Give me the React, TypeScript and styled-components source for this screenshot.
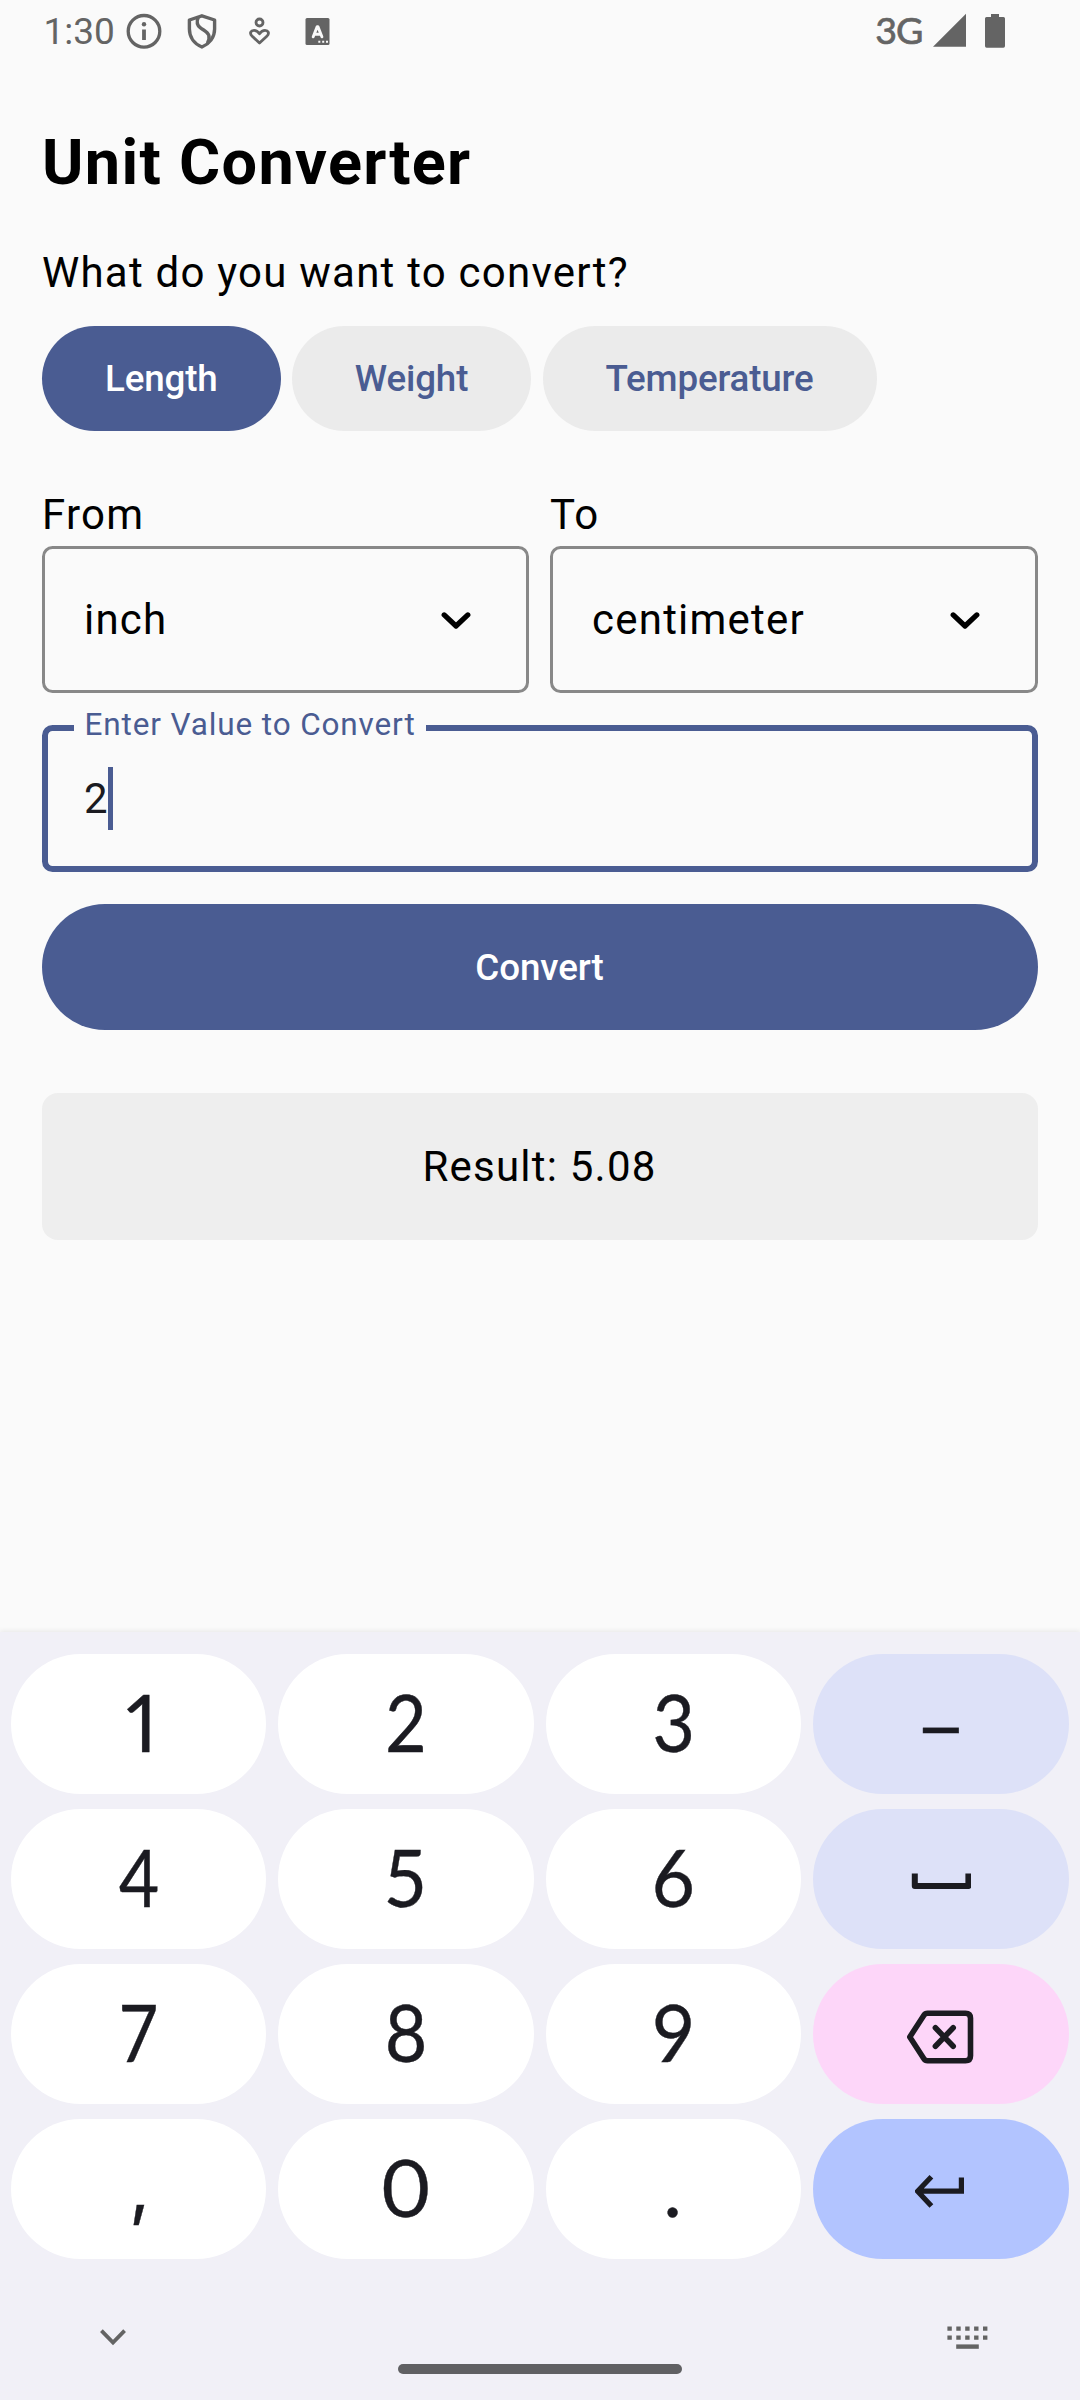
import React from "react";
import styled, { createGlobalStyle } from "styled-components";

const Global = createGlobalStyle`
  *, *::before, *::after { box-sizing: border-box; }
  body { margin: 0; background: #fafafa; font-family: Roboto, sans-serif; }
  button { font: inherit; color: inherit; border: 0; margin: 0; padding: 0; }
  svg { display: block; flex: none; }
`;

const Screen = styled.div`
  width: 1080px;
  height: 2400px;
  display: flex;
  flex-direction: column;
  background: #fafafa;
  color: #000;
  overflow: hidden;
`;

const StatusBar = styled.header`
  height: 63px;
  padding: 0 75px 0 43.5px;
  display: flex;
  justify-content: space-between;
  color: #646464;
`;
const StatusGroup = styled.div<{ $gap: number }>`
  display: flex;
  gap: ${(p) => p.$gap}px;
  padding-top: 13px;
  height: 49px;
`;
const Clock = styled.span`
  width: 82.5px;
  margin-right: -22px;
  font-size: 37px;
  line-height: 37px;
`;
const Network = styled.span`
  font-family: Lato, sans-serif;
  font-weight: 400;
  font-size: 37.5px;
  line-height: 34px;
  letter-spacing: -1px;
  margin-right: 10.5px;
  -webkit-text-stroke: 0.7px currentColor;
`;
const Spacer = styled.span`
  width: 19px;
`;

const Main = styled.main`
  flex: 1;
  padding: 58px 42px 0;
  display: flex;
  flex-direction: column;
`;
const Title = styled.h1`
  margin: 0 0 36px;
  font-size: 63px;
  line-height: 84px;
  font-weight: 700;
  letter-spacing: 1.3125px;
`;
const BodyText = styled.div`
  font-size: 42px;
  line-height: 63px;
  letter-spacing: 1.23px;
  white-space: nowrap;
`;
const Chips = styled.div`
  display: flex;
  gap: 11.3px;
  margin-top: 22px;
`;
const Chip = styled.button<{ $active?: boolean }>`
  height: 105px;
  padding: 0 63px;
  border-radius: 52.5px;
  background: ${(p) => (p.$active ? "#4a5c92" : "#ebebeb")};
  color: ${(p) => (p.$active ? "#fff" : "#4a5c92")};
  font-weight: 500;
  font-size: 36.75px;
  line-height: 52px;
  letter-spacing: -0.16px;
`;
const Units = styled.div`
  display: grid;
  grid-template-columns: 487px 488px;
  gap: 21px;
  margin-top: 52px;
`;
const Select = styled.button`
  width: 100%;
  height: 147px;
  padding: 0 55.5px 0 39px;
  display: flex;
  align-items: center;
  justify-content: space-between;
  background: transparent;
  border: 3px solid #888;
  border-radius: 10.5px;
`;
const Field = styled.label`
  position: relative;
  height: 147px;
  margin-top: 32px;
  padding: 36px;
  display: flex;
  align-items: flex-start;
  border: 6px solid #4a5c92;
  border-radius: 10.5px;
  color: #1b1b21;
`;
const FieldLabel = styled.span`
  position: absolute;
  left: 26px;
  top: -27px;
  padding: 0 10.5px;
  background: #fafafa;
  color: #4a5c92;
  font-size: 31.5px;
  line-height: 42px;
  letter-spacing: 0.87px;
  white-space: nowrap;
`;
const FieldValue = styled(BodyText)`
  letter-spacing: 0;
`;
const Caret = styled.span`
  width: 5.25px;
  height: 63px;
  margin-left: 0.5px;
  background: #4a5c92;
`;
const Submit = styled.button`
  height: 126px;
  margin-top: 32px;
  padding: 1px 1px 0 0;
  border-radius: 63px;
  background: #4a5c92;
  color: #fff;
  font-weight: 500;
  font-size: 36.75px;
  line-height: 52px;
  letter-spacing: -0.12px;
`;
const Result = styled.div`
  height: 147px;
  margin-top: 63px;
  padding-right: 1px;
  display: flex;
  align-items: center;
  justify-content: center;
  border-radius: 16px;
  background: #eee;
`;

const Keyboard = styled.section`
  height: 768px;
  flex: none;
  padding: 22px 11.2px 0 11px;
  display: flex;
  flex-direction: column;
  background: #f1f0f7;
  box-shadow: 0 -1px 5px rgba(0, 0, 0, 0.08);
  color: #1b1b21;
`;
const Keys = styled.div`
  display: grid;
  grid-template-columns: repeat(4, 1fr);
  grid-auto-rows: 140px;
  gap: 15px 12px;
`;
type Tone = "plain" | "soft" | "pink" | "blue";
const tones: Record<Tone, string> = {
  plain: "#fff",
  soft: "#dde1f8",
  pink: "#fdd6f9",
  blue: "#b2c4ff",
};
const Key = styled.button<{ $tone: Tone; $icon?: boolean }>`
  display: flex;
  align-items: center;
  justify-content: center;
  padding: ${(p) => (p.$icon ? "5px 0 0" : "0 0 4px")};
  border-radius: 70px;
  background: ${(p) => tones[p.$tone]};
`;
const Glyph = styled.span<{ $font?: string; $size?: number; $stretch?: number; $x?: number; $y?: number }>`
  font-family: ${(p) => p.$font || "Lato"}, sans-serif;
  font-feature-settings: "pnum";
  font-size: ${(p) => p.$size || 79}px;
  line-height: 96px;
  -webkit-text-stroke: 0.4px currentColor;
  transform: translate(${(p) => p.$x || 0}px, ${(p) => p.$y || 0}px) scaleX(${(p) => p.$stretch || 1});
`;
const NavRow = styled.div`
  display: flex;
  justify-content: space-between;
  margin-top: 64px;
  padding: 0 80.8px 0 89px;
  height: 27px;
  color: #646464;
`;
const HomeBar = styled.div`
  align-self: center;
  width: 284px;
  height: 10px;
  margin-top: 14px;
  border-radius: 5px;
  background: #606063;
`;

const Info = () => (
  <svg width="36" height="36" fill="none" stroke="currentColor">
    <circle cx="18" cy="18.3" r="15.8" strokeWidth="3.3" />
    <circle cx="18" cy="11.2" r="2.2" fill="currentColor" stroke="none" />
    <path d="M18 16.5V27" strokeWidth="3.8" />
  </svg>
);
const Shield = () => (
  <svg width="36" height="36" fill="none" stroke="currentColor" strokeWidth="3.4" strokeLinejoin="round">
    <path d="M17.9 2.8 5.4 7V16C5.4 24.5 10.5 31 17.9 34 25.3 31 30.6 24.5 30.6 16V7Z" />
    <path d="M14.2 4.3C12.6 8.2 12.8 12 16.2 14.6 19.8 17.4 23.6 18.8 24.8 22.3 25.6 25 24.8 27.6 23.4 30.3" />
  </svg>
);
const Wellbeing = () => (
  <svg width="36" height="36" fill="none" stroke="currentColor" strokeWidth="2.8" strokeLinejoin="round">
    <circle cx="17.5" cy="9.5" r="3.5" />
    <path d="M17.5 30 10.2 23.2C7 20.2 9 17.4 12 17.4 14.4 17.4 16 18.6 17.5 20.8 19 18.6 20.6 17.4 23 17.4 26 17.4 28 20.2 24.8 23.2Z" />
  </svg>
);
const Letter = () => (
  <svg width="36" height="36" fill="none">
    <rect x="5.5" y="5" width="24" height="27" rx="1.5" fill="currentColor" />
    <path d="M13.2 23.8 17.2 13.6H17.9L21.9 23.8M14.8 21.2H20.4" stroke="#fafafa" strokeWidth="2.9" strokeLinecap="round" strokeLinejoin="round" />
    <path d="M18.3 28.8H20.3M22.2 28.8H24.2M26 28.8H28" stroke="#fafafa" strokeWidth="2" />
  </svg>
);
const Signal = () => (
  <svg width="33" height="36" fill="currentColor">
    <path d="M0 33.8 33 0.8V33.8Z" />
  </svg>
);
const Battery = () => (
  <svg width="20" height="36" fill="currentColor">
    <path d="M6 1H14V4H18.5Q20 4 20 5.5V33Q20 34.7 18.4 34.7H1.6Q0 34.7 0 33V5.5Q0 4 1.5 4H6Z" />
  </svg>
);
const Chevron = () => (
  <svg width="30" height="20" fill="none" stroke="currentColor" strokeWidth="5.2" strokeLinecap="round" strokeLinejoin="round">
    <path d="M3.2 4.9 15 16 26.8 4.9" />
  </svg>
);
const Space = () => (
  <svg width="60" height="20" fill="none" stroke="currentColor" strokeWidth="6" strokeLinejoin="round">
    <path d="M3.8 1.4V14H57.4V1.4" />
  </svg>
);
const Backspace = () => (
  <svg width="68" height="54" fill="none" stroke="currentColor" strokeWidth="5.6" strokeLinecap="round" strokeLinejoin="round">
    <path d="M20.5 3.2H58.5Q63.5 3.2 63.5 8.2V45.8Q63.5 50.8 58.5 50.8H20.5Q18.2 50.8 16.9 48.8L2.8 27 16.9 5.2Q18.2 3.2 20.5 3.2Z" />
    <path d="M28.4 17.8 46.2 36.2M46.2 17.8 28.4 36.2" />
  </svg>
);
const Enter = () => (
  <svg width="52" height="34" fill="none" stroke="currentColor" strokeWidth="5.2">
    <path d="M16.4 1.8 2.6 16.2 16.4 31M3.6 16.2H46.4V2.6" />
  </svg>
);
const HideKeyboard = () => (
  <svg width="27" height="27" fill="none" stroke="currentColor" strokeWidth="3.8">
    <path d="M1.4 7.6 13 19.6 24.6 7.6" />
  </svg>
);
const KeyboardGlyph = () => (
  <svg width="41" height="27" fill="none" stroke="currentColor" strokeWidth="4.4">
    <path d="M0.4 5.6H40.6M0.4 14.6H40.6" strokeDasharray="4.4 4.5" />
    <path d="M9.2 23.6H31.8" />
  </svg>
);

interface KeySpec {
  label?: string;
  icon?: React.ReactNode;
  tone?: Tone;
  font?: string;
  size?: number;
  stretch?: number;
  x?: number;
  y?: number;
}
const KEYS: KeySpec[] = [
  { label: "1", x: 3 },
  { label: "2", stretch: 0.91, x: -0.5 },
  { label: "3", stretch: 0.93 },
  { label: "–", tone: "soft", stretch: 1.13, y: 1.5 },
  { label: "4", stretch: 0.88, x: 0.5 },
  { label: "5", stretch: 0.95, x: -1 },
  { label: "6", stretch: 0.95 },
  { icon: <Space />, tone: "soft" },
  { label: "7", stretch: 0.87, x: -0.5 },
  { label: "8", stretch: 0.93 },
  { label: "9", stretch: 0.95 },
  { icon: <Backspace />, tone: "pink" },
  { label: ",", font: "Inter", size: 72, x: 1, y: -1 },
  { label: "0", x: -0.5 },
  { label: ".", x: -1 },
  { icon: <Enter />, tone: "blue" },
];

export default function App() {
  return (
    <Screen>
      <Global />
      <StatusBar>
        <StatusGroup $gap={22}>
          <Clock>1:30</Clock>
          <Info />
          <Shield />
          <Wellbeing />
          <Letter />
        </StatusGroup>
        <StatusGroup $gap={0}>
          <Network>3G</Network>
          <Signal />
          <Spacer />
          <Battery />
        </StatusGroup>
      </StatusBar>
      <Main>
        <Title>Unit Converter</Title>
        <BodyText>What do you want to convert?</BodyText>
        <Chips>
          <Chip $active>Length</Chip>
          <Chip>Weight</Chip>
          <Chip>Temperature</Chip>
        </Chips>
        <Units>
          <div>
            <BodyText>From</BodyText>
            <Select><BodyText>inch</BodyText><Chevron /></Select>
          </div>
          <div>
            <BodyText>To</BodyText>
            <Select><BodyText>centimeter</BodyText><Chevron /></Select>
          </div>
        </Units>
        <Field>
          <FieldLabel>Enter Value to Convert</FieldLabel>
          <FieldValue>2</FieldValue>
          <Caret />
        </Field>
        <Submit>Convert</Submit>
        <Result><BodyText>Result: 5.08</BodyText></Result>
      </Main>
      <Keyboard>
        <Keys>
          {KEYS.map((k, i) => (
            <Key key={i} $tone={k.tone || "plain"} $icon={!!k.icon}>
              {k.icon || (
                <Glyph $font={k.font} $size={k.size} $stretch={k.stretch} $x={k.x} $y={k.y}>{k.label}</Glyph>
              )}
            </Key>
          ))}
        </Keys>
        <NavRow>
          <HideKeyboard />
          <KeyboardGlyph />
        </NavRow>
        <HomeBar />
      </Keyboard>
    </Screen>
  );
}
